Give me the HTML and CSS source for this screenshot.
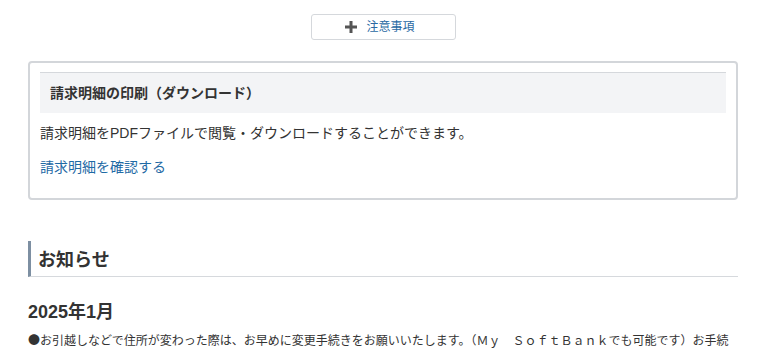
FILE: index.html
```html
<!DOCTYPE html>
<html lang="ja">
<head>
<meta charset="utf-8">
<link rel="stylesheet" href="styles.css">
</head>
<body>
<div class="page">
  <div class="btn-row">
    <button class="toggle-btn" type="button">
      <svg class="plus" width="12" height="12" viewBox="0 0 12 12"><path d="M4.5 0h3v4.5H12v3H7.5V12h-3V7.5H0v-3h4.5z" fill="#555"/></svg>
      <span class="btn-label">注意事項</span>
    </button>
  </div>

  <div class="bill-box">
    <div class="box-head">請求明細の印刷（ダウンロード）</div>
    <p class="box-text">請求明細をPDFファイルで閲覧・ダウンロードすることができます。</p>
    <p class="box-link"><a href="#">請求明細を確認する</a></p>
  </div>

  <h2 class="section-title">お知らせ</h2>
  <h3 class="month">2025年1月</h3>
  <p class="news">●お引越しなどで住所が変わった際は、お早めに変更手続きをお願いいたします。（Ｍｙ　ＳｏｆｔＢａｎｋでも可能です）お手続きの際は、ご本人さま確認書類が必要となります。</p>
</div>
</body>
</html>
```

FILE: styles.css
```css
html, body {
  margin: 0;
  padding: 0;
  background: #fff;
}
body {
  font-family: "Liberation Sans", "Noto Sans CJK JP", sans-serif;
  color: #333;
}
.page {
  width: 710px;
  margin-left: 28px;
  padding-top: 14px;
}
.btn-row {
  display: flex;
  justify-content: center;
}
.toggle-btn {
  box-sizing: border-box;
  width: 145px;
  height: 26px;
  border: 1px solid #d5d8dc;
  border-radius: 3px;
  background: #fff;
  display: flex;
  align-items: center;
  justify-content: center;
  gap: 9px;
  padding: 0 6px 0 0;
  font-family: inherit;
  cursor: pointer;
}
.btn-label {
  font-size: 12px;
  color: #2a6aa3;
  line-height: 1;
}
.bill-box {
  margin-top: 21px;
  border: 2px solid #d3d6da;
  border-radius: 4px;
  padding: 9px 10px 21px;
}
.box-head {
  border-top: 1px solid #d5d8dc;
  background: #f3f4f6;
  height: 40px;
  line-height: 40px;
  padding-left: 10px;
  font-size: 14px;
  font-weight: bold;
  color: #333;
}
.box-text {
  margin: 10px 0 0;
  font-size: 14px;
  line-height: 20px;
}
.box-link {
  margin: 14px 0 0;
  font-size: 14px;
  line-height: 20px;
}
.box-link a {
  color: #1f6aa5;
  text-decoration: none;
}
.section-title {
  margin: 41px 0 0;
  height: 35px;
  line-height: 35px;
  border-left: 3px solid #7d8fa2;
  border-bottom: 1px solid #d6d9dd;
  padding-left: 7px;
  font-family: "Noto Sans CJK JP", sans-serif;
  font-size: 18px;
  font-weight: bold;
}
.month {
  margin: 23px 0 0;
  font-size: 18px;
  line-height: 24px;
  font-weight: bold;
}
.news {
  margin: 6px 0 0;
  font-family: "Noto Sans CJK JP", sans-serif;
  font-size: 12px;
  line-height: 20px;
}
```
